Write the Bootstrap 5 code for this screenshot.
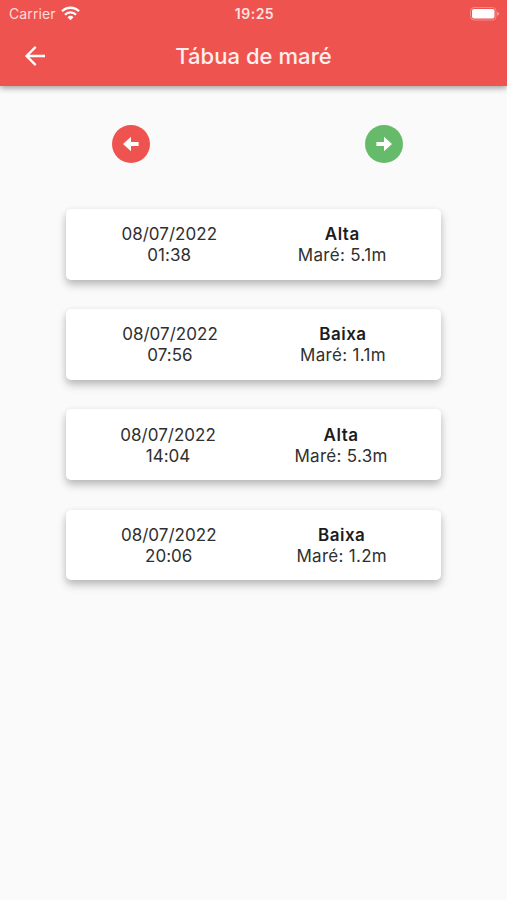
<!DOCTYPE html>
<html lang="pt-BR">
<head>
<meta charset="utf-8">
<meta name="viewport" content="width=device-width, initial-scale=1">
<title>Tábua de maré</title>
<link href="https://cdn.jsdelivr.net/npm/bootstrap@5.3.0/dist/css/bootstrap.min.css" rel="stylesheet">
<style>
body { font-family: Inter, "Liberation Sans", sans-serif; background: #fafafa; color: #303030; min-height: 900px; }
.app-header { background: #ef5350; height: 86px; color: #fff; box-shadow: 0 2px 6px rgba(0,0,0,.38); }
.status-bar { height: 27px; font-size: 14px; line-height: 27px; padding: 0 7px 0 9px; }
.status-side { flex: 1 1 0; }
.carrier { color: #ffdcd9; letter-spacing: .1px; }
.clock { color: #ffe3e0; font-size: 14px; letter-spacing: .5px; }
.title-bar { height: 57px; padding: 0 23px; }
.page-title { font-size: 22px; font-weight: 500; color: #fff0ee; letter-spacing: .05px; line-height: 26px; }
.title-side { flex: 1 1 0; }
.pager { padding-top: 39px; height: 123px; }
.pager .col-6 { padding: 0 0 0 7px; }
.pager .col-6:first-child { padding-left: 8px; }
.round-btn { width: 38px; height: 38px; border: 0; }
.prev-day { background: #ef5350; }
.next-day { background: #66bb6a; }
.tide-list { width: 375px; gap: 29.7px; }
.tide-card { height: 70.5px; border: 0; border-radius: 5px; padding: 2px 14px 0 15px; background: #fff; color: inherit; font-size: 17px; line-height: 21px; box-shadow: 0 5px 8px rgba(0,0,0,.24), 0 1px 6px rgba(0,0,0,.06); }
.tide-time { letter-spacing: .03px; }
.tide-level { letter-spacing: .3px; }
.tide-kind { font-weight: 600; color: #1c1c1c; letter-spacing: .5px; }
</style>
</head>
<body>
<header class="app-header">
  <div class="status-bar d-flex align-items-center">
    <div class="status-side d-flex align-items-center">
      <span class="carrier">Carrier</span>
      <svg class="ms-1" width="21" height="16" viewBox="0 0 21 16" fill="none" stroke="#fff" stroke-width="2.3">
        <path d="M2 5.3a12 12 0 0 1 17 0M5 8.7a7.8 7.8 0 0 1 11 0"/>
        <path d="M10.5 14.3l-3-3a4.3 4.3 0 0 1 6 0z" fill="#fff" stroke="none"/>
      </svg>
    </div>
    <div class="clock fw-semibold">19:25</div>
    <div class="status-side d-flex justify-content-end">
      <svg width="30" height="14" viewBox="0 0 30 14">
        <rect x=".5" y=".5" width="25.5" height="12.5" rx="3.5" fill="none" stroke="#f58b87"/>
        <rect x="2" y="2" width="22.5" height="9.5" rx="2" fill="#fff"/>
        <path d="M27.3 4.8q1.8.8 1.8 2t-1.8 2z" fill="#f9aaa5"/>
      </svg>
    </div>
  </div>
  <div class="title-bar d-flex align-items-center">
    <div class="title-side d-flex">
      <svg width="24" height="24" viewBox="0 0 24 24" fill="none" stroke="#fff" stroke-width="2.3">
        <path d="M22 12H4M12.7 2.9L3.6 12l9.1 9.1"/>
      </svg>
    </div>
    <h1 class="page-title m-0">Tábua de maré</h1>
    <div class="title-side"></div>
  </div>
</header>
<main>
  <div class="pager row g-0">
    <div class="col-6 d-flex justify-content-center">
      <button class="round-btn prev-day rounded-circle p-0 d-flex align-items-center justify-content-center" aria-label="Anterior">
        <svg width="16" height="16" viewBox="0 0 16 16" fill="#fff"><path d="M0 8L8 .8V6h7.6v4H8v5.2z"/></svg>
      </button>
    </div>
    <div class="col-6 d-flex justify-content-center">
      <button class="round-btn next-day rounded-circle p-0 d-flex align-items-center justify-content-center" aria-label="Próximo">
        <svg width="16" height="16" viewBox="0 0 16 16" fill="#fff"><path d="M16 8L8 .8V6H.4v4H8v5.2z"/></svg>
      </button>
    </div>
  </div>
  <div class="tide-list d-flex flex-column mx-auto text-center">
    <div class="tide-card card flex-row align-items-center justify-content-around">
      <div class="tide-time">08/07/2022<br>01:38</div>
      <div class="tide-level"><div class="tide-kind">Alta</div>Maré: 5.1m</div>
    </div>
    <div class="tide-card card flex-row align-items-center justify-content-around">
      <div class="tide-time">08/07/2022<br>07:56</div>
      <div class="tide-level"><div class="tide-kind">Baixa</div>Maré: 1.1m</div>
    </div>
    <div class="tide-card card flex-row align-items-center justify-content-around">
      <div class="tide-time">08/07/2022<br>14:04</div>
      <div class="tide-level"><div class="tide-kind">Alta</div>Maré: 5.3m</div>
    </div>
    <div class="tide-card card flex-row align-items-center justify-content-around">
      <div class="tide-time">08/07/2022<br>20:06</div>
      <div class="tide-level"><div class="tide-kind">Baixa</div>Maré: 1.2m</div>
    </div>
  </div>
</main>
<script src="https://cdn.jsdelivr.net/npm/bootstrap@5.3.0/dist/js/bootstrap.bundle.min.js"></script>
</body>
</html>
